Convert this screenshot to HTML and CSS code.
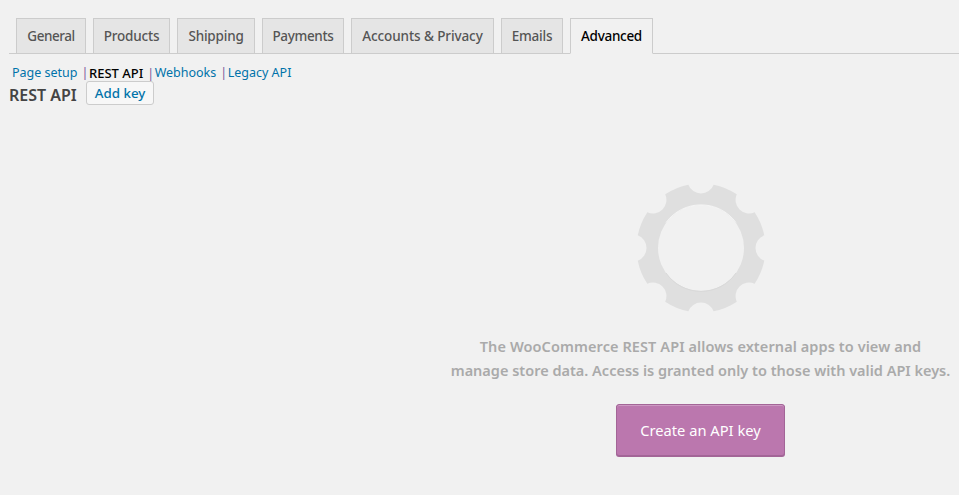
FILE: index.html
```html
<!DOCTYPE html>
<html lang="en">
<head>
<meta charset="utf-8">
<title>REST API</title>
<link rel="stylesheet" href="styles.css">
</head>
<body>
<div class="wrap">
  <nav class="tabs">
    <a class="tab" href="#">General</a>
    <a class="tab" href="#">Products</a>
    <a class="tab" href="#">Shipping</a>
    <a class="tab" href="#">Payments</a>
    <a class="tab" href="#">Accounts &amp; Privacy</a>
    <a class="tab" href="#">Emails</a>
    <a class="tab active" href="#">Advanced</a>
  </nav>
  <ul class="subnav">
    <li><a href="#">Page setup</a><span class="sep">|</span></li>
    <li><a class="current" href="#">REST API</a><span class="sep">|</span></li>
    <li><a href="#">Webhooks</a><span class="sep">|</span></li>
    <li><a href="#">Legacy API</a></li>
  </ul>
  <div class="heading">
    <h2>REST API</h2>
    <a class="add" href="#">Add key</a>
  </div>
  <section class="blank">
    <svg class="gear" width="130" height="130" viewBox="-65 -65 130 130" aria-hidden="true">
      <path fill="#dfdfdf" fill-rule="evenodd" d="M12.64 -63.25A64.5 64.5 0 0 1 35.78 -53.66A13.5 13.5 0 0 0 53.66 -35.78A64.5 64.5 0 0 1 63.25 -12.64A13.5 13.5 0 0 0 63.25 12.64A64.5 64.5 0 0 1 53.66 35.78A13.5 13.5 0 0 0 35.78 53.66A64.5 64.5 0 0 1 12.64 63.25A13.5 13.5 0 0 0 -12.64 63.25A64.5 64.5 0 0 1 -35.78 53.66A13.5 13.5 0 0 0 -53.66 35.78A64.5 64.5 0 0 1 -63.25 12.64A13.5 13.5 0 0 0 -63.25 -12.64A64.5 64.5 0 0 1 -53.66 -35.78A13.5 13.5 0 0 0 -35.78 -53.66A64.5 64.5 0 0 1 -12.64 -63.25A13.5 13.5 0 0 0 12.64 -63.25ZM43 0A43 43 0 1 0 -43 0A43 43 0 1 0 43 0Z"/>
      <path fill="none" stroke="#fff" stroke-opacity=".6" d="M-35 -25.5A43.5 43.5 0 0 1 35 -25.5"/>
      <path fill="none" stroke="#d9d9d9" d="M-35 25A42.5 42.5 0 0 0 35 25"/>
    </svg>
    <p>The WooCommerce REST API allows external apps to view and<br>manage store data. Access is granted only to those with valid API keys.</p>
    <a class="cta" href="#">Create an API key</a>
  </section>
</div>
</body>
</html>
```

FILE: styles.css
```css
* { box-sizing: border-box; }
html, body { margin: 0; height: 100%; }
body {
  background: #f1f1f1;
  color: #444;
  font-family: "Noto Sans", sans-serif;
  font-size: 13px;
  overflow: hidden;
}
a { text-decoration: none; }
.wrap { padding: 18px 0 0 9px; }
.tabs {
  display: flex;
  gap: 7px;
  height: 36px;
  padding-left: 7px;
  border-bottom: 1px solid #ccc;
}
.tab {
  height: 36px;
  line-height: 34px;
  text-align: center;
  background: #e5e5e5;
  border: 1px solid #ccc;
  color: #555;
  font-size: 13.5px;
  font-weight: 500;
  letter-spacing: -0.2px;
  white-space: nowrap;
}
.tab:nth-child(1) { width: 70px; letter-spacing: -0.45px; }
.tab:nth-child(2) { width: 77px; }
.tab:nth-child(3) { width: 78px; }
.tab:nth-child(4) { width: 82px; letter-spacing: -0.35px; }
.tab:nth-child(5) { width: 143px; letter-spacing: -0.1px; }
.tab:nth-child(6) { width: 62px; }
.tab:nth-child(7) { width: 83px; letter-spacing: -0.3px; }
.tab.active {
  background: #f1f1f1;
  border-bottom-color: #f1f1f1;
  color: #000;
}
.subnav {
  display: flex;
  list-style: none;
  margin: 10px 0 0;
  padding: 0 0 0 3px;
  height: 18px;
  line-height: 18px;
  font-size: 12.5px;
}
.subnav a { color: #0073aa; }
.subnav a.current { color: #000; font-size: 13px; font-weight: 500; }
.sep { color: #7b5a9e; margin: 0 0.5px 0 4px; }
.heading {
  display: flex;
  align-items: flex-start;
  gap: 9px;
  height: 23px;
  margin-top: -1px;
}
.heading h2 {
  margin: 4px 0 0;
  font-size: 16px;
  line-height: 20px;
  font-weight: 600;
  color: #444;
}
.add {
  height: 24px;
  padding: 0 8px;
  line-height: 22px;
  background: #f7f7f7;
  border: 1px solid #ccc;
  border-radius: 3px;
  color: #0073aa;
  font-size: 13.3px;
  font-weight: 500;
}
.blank {
  width: 517px;
  margin: 79px 0 0 auto;
  display: flex;
  flex-direction: column;
  align-items: center;
}
.gear { display: block; }
.blank p {
  margin: 21px 0 0;
  color: #aaa;
  font-size: 14.5px;
  line-height: 24px;
  font-weight: 600;
  text-align: center;
  white-space: nowrap;
}
.blank p::first-line { letter-spacing: 0.09px; }
.cta {
  margin-top: 22px;
  width: 169px;
  height: 52px;
  line-height: 50px;
  text-align: center;
  background: #bb77ae;
  border: 1px solid #a36597;
  border-radius: 3px;
  box-shadow: inset 0 1px 0 rgba(255,255,255,.25), 0 1px 0 #a36597;
  color: #fff;
  font-size: 14.7px;
}
```
